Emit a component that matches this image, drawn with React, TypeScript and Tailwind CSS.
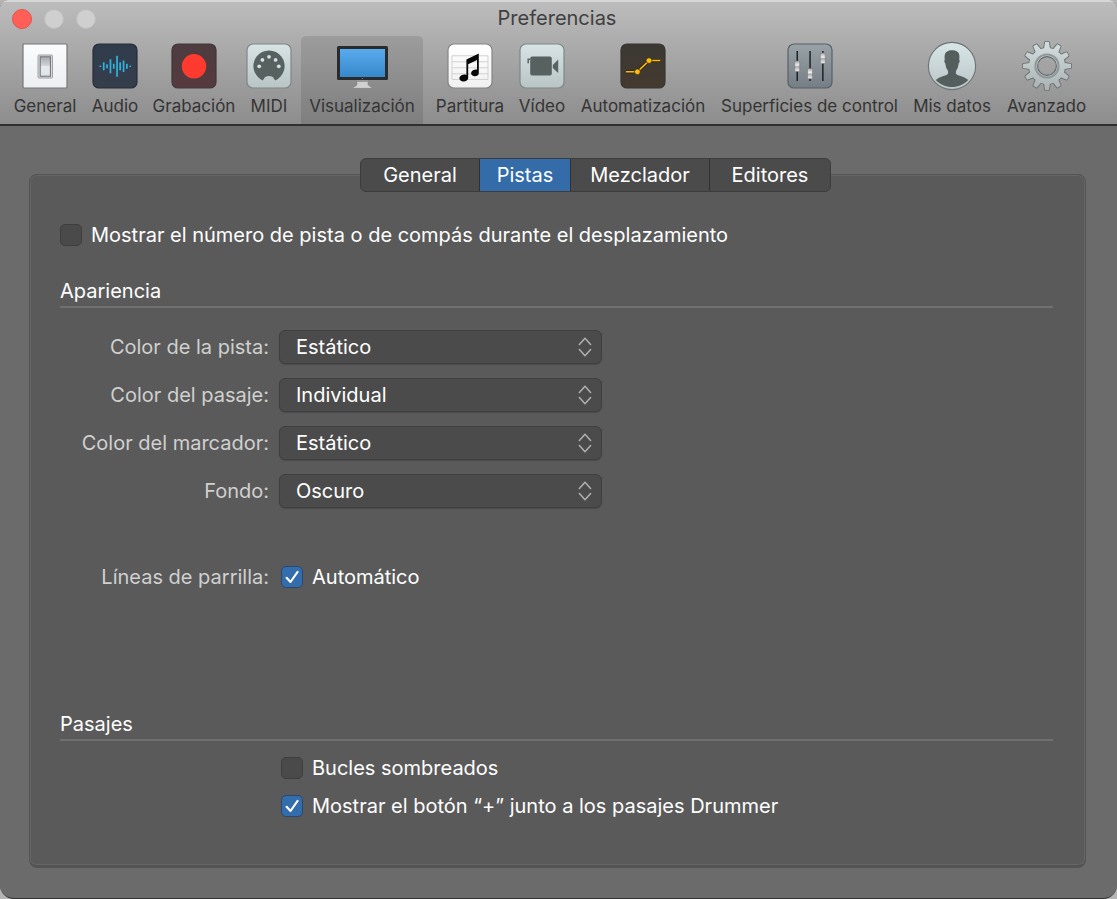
import { useId, useState } from "react";
import type { ReactNode } from "react";

function Tile({ children, id, from, to, stroke, radius = 6 }: {
  children: ReactNode;
  id: string;
  from: string;
  to: string;
  stroke: string;
  radius?: number;
}) {
  return (
    <svg width="46" height="46" viewBox="0 0 46 46" aria-hidden="true">
      <defs>
        <linearGradient id={id} x1="0" y1="0" x2="0" y2="1">
          <stop offset="0" stopColor={from} />
          <stop offset="1" stopColor={to} />
        </linearGradient>
      </defs>
      <rect x="1" y="1" width="44" height="44" rx={radius} fill={`url(#${id})`} stroke={stroke} strokeWidth="1.2" />
      {children}
    </svg>
  );
}

function GeneralIcon() {
  return (
    <Tile id="general" from="#fbfcfd" to="#eceef2" stroke="#777" radius={1}>
      <defs>
        <linearGradient id="rocker" x1="0" y1="0" x2="0" y2="1">
          <stop offset="0" stopColor="#a6a9ae" />
          <stop offset="0.46" stopColor="#d0d3d7" />
          <stop offset="0.5" stopColor="#e6eaec" />
          <stop offset="1" stopColor="#dde4e7" />
        </linearGradient>
      </defs>
      <rect x="16" y="12" width="14.5" height="23" rx="1" fill="#d9d9dc" stroke="#909094" strokeWidth="0.8" />
      <rect x="18.2" y="13.8" width="10.2" height="19.4" fill="url(#rocker)" stroke="#6c6f74" strokeWidth="1" />
    </Tile>
  );
}

const wave = [
  [7.7, 1.4], [11.1, 8], [14.4, 4], [17.8, 14], [21.1, 5], [24.4, 21],
  [27.5, 8], [30.9, 11.5], [34.2, 5], [37.6, 1.4],
];

function AudioIcon() {
  return (
    <Tile id="audio" from="#303c4c" to="#353e4b" stroke="#252d38">
      {wave.map(([x, h]) => (
        <rect key={x} x={x - 0.2} y={23.3 - h / 2} width="1.7" height={h} fill="#31b2e2" />
      ))}
    </Tile>
  );
}

function RecordIcon() {
  return (
    <Tile id="record" from="#4d3c40" to="#553a3e" stroke="#40363a">
      <circle cx="23" cy="23.3" r="12.2" fill="#ff3b30" />
    </Tile>
  );
}

function MidiIcon() {
  return (
    <Tile id="midi" from="#d7e3e5" to="#b9c4c5" stroke="#7e8889">
      <path d="M16.9 37.4 A15.6 15.6 0 1 1 29.1 37.4 C27.8 36 28 33 23 33 C18 33 18.2 36 16.9 37.4 Z" fill="#566160" />
      {[[13.2, 23.3], [16.4, 16.9], [23, 13.8], [29.6, 16.9], [32.8, 23.3]].map(([x, y]) => (
        <circle key={x} cx={x} cy={y} r="1.9" fill="#d3dfe1" />
      ))}
    </Tile>
  );
}

function DisplayIcon() {
  return (
    <svg width="52" height="46" viewBox="0 0 52 46" aria-hidden="true">
      <defs>
        <linearGradient id="screen" x1="0" y1="0" x2="0" y2="1">
          <stop offset="0" stopColor="#5aaaee" />
          <stop offset="1" stopColor="#3788cb" />
        </linearGradient>
      </defs>
      <path d="M20.8 37 H32.2 V41.6 C32.2 43 36 43.6 36.6 45.4 H16.4 C17 43.6 20.8 43 20.8 41.6 Z" fill="#d0d0d0" stroke="#777" strokeWidth="0.7" />
      <path d="M20.8 37 H32.2 V39 H20.8 Z" fill="#999" />
      <rect x="1" y="3" width="51" height="34" rx="1.5" fill="#292b2c" />
      <rect x="4" y="6" width="45" height="28" fill="url(#screen)" />
      <circle cx="26.5" cy="35.6" r="0.6" fill="#777" />
    </svg>
  );
}

function ScoreIcon() {
  return (
    <Tile id="score" from="#ffffff" to="#f1f1f1" stroke="#858585">
      <path d="M5 12.8H41M5 18.8H41M5 24.8H41M5 30.8H41M5 36.4H41M5 12.8V36.4M41 12.8V36.4" stroke="#ccc" strokeWidth="0.9" fill="none" />
      <path d="M19.4 16.4 L31.8 10.4 V30 C31.8 32.6 28.8 33.6 26.6 33 C23.6 32.1 23.3 28.8 26 27.2 C27.4 26.4 29 26.2 30 26.6 V17 L21.2 21.2 V35 C21.2 37.6 17.8 38.9 15 38.2 C11.6 37.3 11.7 33.8 14.4 32.3 C16.2 31.4 18.3 31.4 19.4 31.9 Z" fill="#080808" />
    </Tile>
  );
}

function VideoIcon() {
  return (
    <Tile id="video" from="#d7e3e5" to="#b9c4c5" stroke="#7e8889">
      <rect x="11.2" y="13.6" width="21.6" height="18.8" rx="2" fill="#566160" />
      <path d="M33.8 22 L39.2 16.6 V30 L33.8 25 Z" fill="#566160" />
      <path d="M11 16.2 H9.2 V20.2" stroke="#566160" strokeWidth="1.5" fill="none" />
    </Tile>
  );
}

function AutomationIcon() {
  return (
    <Tile id="automation" from="#3b3833" to="#443a30" stroke="#383532">
      <path d="M6 28.8H17.4L29 17.6H40.2" stroke="#30271b" strokeWidth="3.4" fill="none" />
      <path d="M6 28.8H17.4L29 17.6H40.2" stroke="#fdbb0a" strokeWidth="1.5" fill="none" />
      <circle cx="17.4" cy="28.8" r="2.9" fill="#fdbb0a" stroke="#30271b" strokeWidth="0.7" />
      <circle cx="29" cy="17.6" r="2.9" fill="#fdbb0a" stroke="#30271b" strokeWidth="0.7" />
    </Tile>
  );
}

function FadersIcon() {
  return (
    <Tile id="faders" from="#98a2a7" to="#747e84" stroke="#566068">
      <defs>
        <linearGradient id="knob" x1="0" y1="0" x2="0" y2="1">
          <stop offset="0" stopColor="#aaa" />
          <stop offset="0.4" stopColor="#eee" />
          <stop offset="0.55" stopColor="#aaa" />
          <stop offset="1" stopColor="#f4f4f4" />
        </linearGradient>
      </defs>
      {[[10.2, 18], [23, 25.4], [35.8, 10]].map(([x, y]) => (
        <g key={x}>
          <rect x={x - 0.7} y="8" width="1.5" height="30" fill="#202326" />
          <rect x={x - 2.5} y={y} width="5" height="10.4" rx="1" fill="url(#knob)" stroke="#777" strokeWidth="0.6" />
        </g>
      ))}
    </Tile>
  );
}

function PersonIcon() {
  return (
    <svg width="50" height="50" viewBox="0 0 50 50" aria-hidden="true">
      <defs>
        <linearGradient id="disc" x1="0" y1="0" x2="0" y2="1">
          <stop offset="0" stopColor="#d9e6e8" />
          <stop offset="1" stopColor="#b9c4c5" />
        </linearGradient>
      </defs>
      <circle cx="25" cy="25" r="23.6" fill="url(#disc)" stroke="#6c7475" strokeWidth="1.1" />
      <path d="M8.8 39 C12 35.6 18 35 20.6 33.2 C21.6 32.2 21 30.4 20.7 29.2 C19 27.4 18.7 25 18.4 22.6 C17.4 22 16.9 19.4 17.8 18.6 C16.6 11.6 20 9.2 25 9.2 C30.4 9.2 33.4 11.6 32.2 18.6 C33.1 19.4 32.6 22 31.6 22.6 C31.3 25 31 27.4 29.3 29.2 C29 30.4 28.4 32.2 29.4 33.2 C32 35 38 35.6 41.2 39 C32.4 48.4 17.6 48.4 8.8 39 Z" fill="#535e5d" />
    </svg>
  );
}

const teeth = [0, 30, 60, 90, 120, 150, 180, 210, 240, 270, 300, 330];

function GearIcon() {
  return (
    <svg width="50" height="50" viewBox="0 0 50 50" aria-hidden="true">
      <defs>
        <linearGradient id="gear" gradientUnits="userSpaceOnUse" x1="0" y1="0" x2="0" y2="50">
          <stop offset="0" stopColor="#d5dfe1" />
          <stop offset="1" stopColor="#a9b1b1" />
        </linearGradient>
        <mask id="hole">
          <rect width="50" height="50" fill="white" />
          <circle cx="25" cy="25" r="9.4" fill="black" />
        </mask>
      </defs>
      <g mask="url(#hole)">
        <g fill="#696f70">
          {teeth.map((a) => (
            <path key={a} d="M20.8 9 L22.2 1 Q22.4 0.2 23.2 0.2 H26.8 Q27.6 0.2 27.8 1 L29.2 9 Z" transform={`rotate(${a} 25 25)`} />
          ))}
          <circle cx="25" cy="25" r="18.8" />
        </g>
        <circle cx="25" cy="25" r="18" fill="url(#gear)" />
        {teeth.map((a) => {
          const r = (a * Math.PI) / 180;
          const pts = [[-3.2, -16], [-1.9, -24], [1.9, -24], [3.2, -16]]
            .map(([x, y]) => `${25 + x * Math.cos(r) - y * Math.sin(r)},${25 + x * Math.sin(r) + y * Math.cos(r)}`)
            .join(" ");
          return <polygon key={a} points={pts} fill="url(#gear)" />;
        })}
        <circle cx="25" cy="25" r="11.6" fill="none" stroke="#8f9798" strokeWidth="2" />
      </g>
      <circle cx="25" cy="25" r="9.4" fill="none" stroke="#62686a" strokeWidth="1.1" />
    </svg>
  );
}

const tools = [
  { label: "General", width: "w-[78px]", icon: <GeneralIcon /> },
  { label: "Audio", width: "w-[62px]", icon: <AudioIcon /> },
  { label: "Grabación", width: "w-[96px]", icon: <RecordIcon /> },
  { label: "MIDI", width: "w-[54px]", icon: <MidiIcon /> },
  { label: "Visualización", width: "w-[122px] mr-[3px] ml-[5px]", icon: <DisplayIcon /> },
  { label: "Partitura", width: "w-[88px]", icon: <ScoreIcon /> },
  { label: "Vídeo", width: "w-[56px]", icon: <VideoIcon /> },
  { label: "Automatización", width: "w-[146px]", icon: <AutomationIcon /> },
  { label: "Superficies de control", width: "w-[187px]", icon: <FadersIcon /> },
  { label: "Mis datos", width: "w-[98px]", icon: <PersonIcon /> },
  { label: "Avanzado", width: "w-[91px]", icon: <GearIcon /> },
];

function Toolbar() {
  const [active, setActive] = useState("Visualización");
  return (
    <nav aria-label="Secciones" className="flex pl-[6px]">
      {tools.map((t) => (
        <button
          key={t.label}
          type="button"
          onClick={() => setActive(t.label)}
          className={`${t.width} flex h-[88px] shrink-0 flex-col items-center rounded-t-[5px] pt-1 text-[17px] leading-5 whitespace-nowrap text-[#343434] ${
            active === t.label ? "bg-black/10" : ""
          }`}
        >
          <span className="flex h-[52px] items-center justify-center">{t.icon}</span>
          <span className="mt-1">{t.label}</span>
        </button>
      ))}
    </nav>
  );
}

function Check({ label, initial = false }: { label: string; initial?: boolean }) {
  const [on, setOn] = useState(initial);
  return (
    <label className="flex items-center gap-[9px] text-[20px] leading-[26px] text-white">
      <span className="grid size-[22px] shrink-0">
        <input
          type="checkbox"
          checked={on}
          onChange={(e) => setOn(e.target.checked)}
          className="col-start-1 row-start-1 size-[22px] appearance-none rounded-[5px] border border-[#3e3e3e] bg-[#4a4a4a] checked:border-[#28486f] checked:bg-[#336dab]"
        />
        {on && (
          <svg viewBox="0 0 22 22" className="pointer-events-none col-start-1 row-start-1 size-[22px]" aria-hidden="true">
            <path d="M5.6 11.8 L9.5 16 L16.6 5.8" fill="none" stroke="#fff" strokeWidth="2.1" strokeLinecap="round" strokeLinejoin="round" />
          </svg>
        )}
      </span>
      {label}
    </label>
  );
}

function SelectRow({ label, value, options }: { label: string; value: string; options: string[] }) {
  const id = useId();
  return (
    <div className="flex items-center gap-[10px]">
      <label htmlFor={id} className="w-[209px] text-right text-[20px] leading-[26px] text-[#d0d0d0]">
        {label}
      </label>
      <div className="grid w-[323px] items-center">
        <select
          id={id}
          defaultValue={value}
          className="col-start-1 row-start-1 h-[34px] w-full appearance-none rounded-[6px] border border-[#3f3f3f] bg-[#4b4b4b] pr-10 pl-4 text-[20px] text-white shadow-[0_1px_1px_rgba(0,0,0,0.15)]"
        >
          {options.map((o) => (
            <option key={o}>{o}</option>
          ))}
        </select>
        <svg width="14" height="20" viewBox="0 0 14 20" className="pointer-events-none col-start-1 row-start-1 mr-[10px] justify-self-end" aria-hidden="true">
          <path d="M1.4 7.4 L7 1.2 L12.6 7.4 M1.4 12.6 L7 18.8 L12.6 12.6" fill="none" stroke="#b0b0b0" strokeWidth="1.5" strokeLinecap="round" strokeLinejoin="round" />
        </svg>
      </div>
    </div>
  );
}

const tabs = [
  { label: "General", width: "w-[119px]" },
  { label: "Pistas", width: "w-[91px]" },
  { label: "Mezclador", width: "w-[139px]" },
  { label: "Editores", width: "w-[120px]" },
];

function Tabs() {
  const [active, setActive] = useState("Pistas");
  return (
    <div className="z-10 -mb-[18px] flex justify-center pl-[76px]">
      <div role="tablist" className="flex h-[34px] divide-x divide-[#303030] overflow-hidden rounded-[6px] border border-[#3c3c3c] bg-[#4b4b4b]">
        {tabs.map((t) => (
          <button
            key={t.label}
            type="button"
            role="tab"
            aria-selected={active === t.label}
            onClick={() => setActive(t.label)}
            className={`${t.width} text-center text-[20px] leading-8 text-white ${active === t.label ? "bg-[#336ca9]" : ""}`}
          >
            {t.label}
          </button>
        ))}
      </div>
    </div>
  );
}

function Heading({ children }: { children: ReactNode }) {
  return (
    <h2 className="border-b-2 border-[#707070] pb-[2px] text-[20px] leading-[26px] text-white">{children}</h2>
  );
}

export default function App() {
  return (
    <div className="min-h-screen bg-[#b5b5b5] font-['Inter','Liberation_Sans',sans-serif]">
      <div className="flex min-h-screen flex-col overflow-hidden rounded-t-[8px] rounded-b-[14px] border-b border-[#333] bg-[#6b6b6b]">
        <header className="border-t-2 border-b-2 border-t-[#d6d6d6] border-b-[#303030] bg-linear-to-b from-[#bcbcbc] to-[#8d8d8d]">
          <div className="grid h-[34px] grid-cols-[1fr_auto_1fr] items-center pr-[15px] pl-3">
            <div className="flex items-center gap-3">
              <button type="button" aria-label="Cerrar" className="size-5 rounded-full border border-[#e2544d] bg-[#ff5f57]" />
              <button type="button" aria-label="Minimizar" className="size-5 rounded-full border border-[#bdbdbd] bg-[#cfcfcf]" />
              <button type="button" aria-label="Ampliar" className="size-5 rounded-full border border-[#bdbdbd] bg-[#cfcfcf]" />
            </div>
            <h1 className="pb-[3px] text-[20px] leading-6 text-[#404040]">Preferencias</h1>
          </div>
          <Toolbar />
        </header>

        <main className="flex flex-1 flex-col pt-8 pr-[31px] pb-[30px] pl-[29px]">
          <Tabs />
          <section className="flex-1 rounded-[8px] border border-b-[3px] border-[#545454] bg-[#5a5a5a] pt-[47px] pr-8 pb-11 pl-[30px] shadow-[inset_0_0_0_1px_#666]">
            <Check label="Mostrar el número de pista o de compás durante el desplazamiento" />
            <div className="mt-[30px]">
              <Heading>Apariencia</Heading>
            </div>
            <div className="mt-[22px] flex flex-col gap-[14px]">
              <SelectRow label="Color de la pista:" value="Estático" options={["Estático", "Individual"]} />
              <SelectRow label="Color del pasaje:" value="Individual" options={["Estático", "Individual"]} />
              <SelectRow label="Color del marcador:" value="Estático" options={["Estático", "Individual"]} />
              <SelectRow label="Fondo:" value="Oscuro" options={["Oscuro", "Claro"]} />
            </div>
            <div className="mt-14 flex items-center gap-3">
              <span className="w-[209px] text-right text-[20px] leading-[26px] text-[#d0d0d0]">Líneas de parrilla:</span>
              <Check label="Automático" initial />
            </div>
            <div className="mt-[121px]">
              <Heading>Pasajes</Heading>
            </div>
            <div className="mt-[14px] ml-[221px] flex flex-col gap-3">
              <Check label="Bucles sombreados" />
              <Check label="Mostrar el botón “+” junto a los pasajes Drummer" initial />
            </div>
          </section>
        </main>
      </div>
    </div>
  );
}
